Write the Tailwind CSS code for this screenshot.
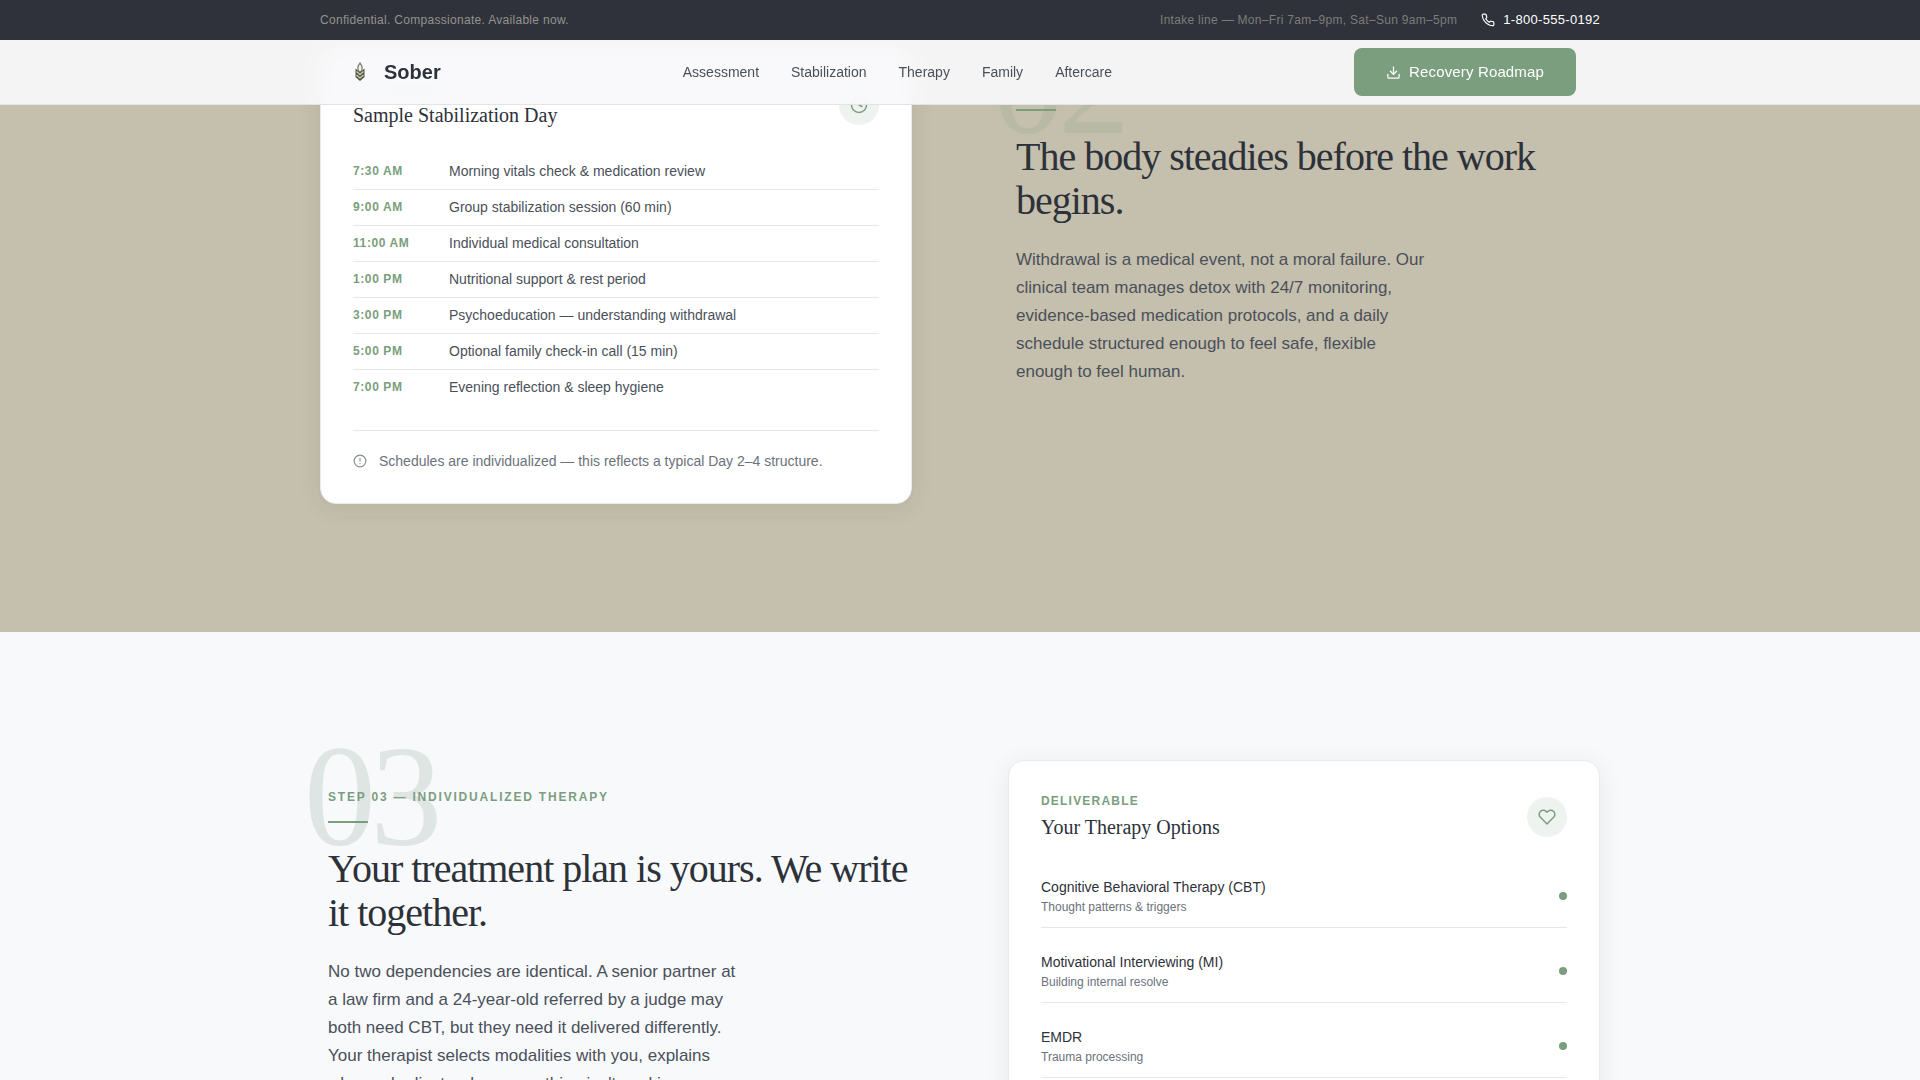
<!DOCTYPE html>
<html lang="en">
<head>
  <meta charset="UTF-8">
  <meta name="viewport" content="width=device-width, initial-scale=1.0">
  <title>Sober | Recovery Roadmap</title>
  <script src="https://cdn.jsdelivr.net/npm/@tailwindcss/browser@4"></script>
</head>
<body class="bg-[#f8f9fb] text-[#2d3139] font-['Liberation_Sans',sans-serif] overflow-x-hidden">

  <!-- Top bar + Navigation -->
  <header class="fixed top-0 inset-x-0 z-50">
    <div class="bg-[#2f323b]">
      <div class="max-w-7xl mx-auto h-10 flex items-center justify-between text-xs tracking-wide">
        <p class="text-[#94928c]">Confidential. Compassionate. Available now.</p>
        <div class="flex items-center gap-6">
          <span class="text-[#7d7c79]">Intake line — Mon–Fri 7am–9pm, Sat–Sun 9am–5pm</span>
          <a href="tel:18005550192" class="flex items-center gap-2 text-[13px] text-white">
            <svg class="size-3.5" viewBox="0 0 24 24" fill="none" stroke="currentColor" stroke-width="2" stroke-linecap="round" stroke-linejoin="round"><path d="M22 16.92v3a2 2 0 0 1-2.18 2 19.79 19.79 0 0 1-8.63-3.07 19.5 19.5 0 0 1-6-6 19.79 19.79 0 0 1-3.07-8.67A2 2 0 0 1 4.11 2h3a2 2 0 0 1 2 1.72 12.84 12.84 0 0 0 .7 2.81 2 2 0 0 1-.45 2.11L8.09 9.91a16 16 0 0 0 6 6l1.27-1.27a2 2 0 0 1 2.11-.45 12.84 12.84 0 0 0 2.81.7A2 2 0 0 1 22 16.92z"/></svg>
            1-800-555-0192
          </a>
        </div>
      </div>
    </div>
    <div class="bg-[#f8f9fb]/92 backdrop-blur-md border-b border-[#e2e5e3]">
      <div class="max-w-7xl mx-auto px-6 h-16 flex items-center justify-between">
        <a href="#" class="flex items-center gap-2 text-xl font-bold">
          <svg class="size-8" viewBox="0 0 32 32">
            <path d="M16 7l2 3.4v4L16 16.5l-2-2.1v-4z" fill="#f3f4ea" stroke="#6a6c56" stroke-width="1.1"/>
            <path d="M11.5 12.5l4.5 4 4.5-4V21L16 25l-4.5-4z" fill="#4d5046"/>
            <path d="M12.5 15.5l3.5 3 3.5-3M12.5 19l3.5 3 3.5-3" fill="none" stroke="#c4c79d" stroke-width="1.6"/>
          </svg>
          Sober
        </a>
        <nav class="flex gap-8 text-sm text-[#4a5059]">
          <a href="#assessment">Assessment</a>
          <a href="#stabilization">Stabilization</a>
          <a href="#therapy">Therapy</a>
          <a href="#family">Family</a>
          <a href="#aftercare">Aftercare</a>
        </nav>
        <button class="h-12 px-8 flex items-center gap-2 rounded-lg bg-[#7a9e7e] text-white text-[15px] tracking-[0.01em]">
          <svg class="size-[15px]" viewBox="0 0 24 24" fill="none" stroke="currentColor" stroke-width="2" stroke-linecap="round" stroke-linejoin="round"><path d="M21 15v4a2 2 0 0 1-2 2H5a2 2 0 0 1-2-2v-4"/><path d="M7 10l5 5 5-5"/><path d="M12 15V3"/></svg>
          Recovery Roadmap
        </button>
      </div>
    </div>
  </header>

  <main class="-mt-20">
    <!-- Step 02 -->
    <section id="stabilization" class="bg-[#c5bfad] py-32">
      <div class="max-w-7xl mx-auto grid grid-cols-1 lg:grid-cols-2 gap-24">
        <div class="bg-white border border-[#e8ebe8] rounded-2xl p-8 shadow-[0_4px_24px_rgba(45,49,57,0.08)]">
          <div class="flex items-center justify-between mb-[25px]">
            <div>
              <p class="text-xs font-bold tracking-widest text-[#7a9e7e] mb-1">DELIVERABLE</p>
              <h3 class="font-['Liberation_Serif',serif] text-xl">Sample Stabilization Day</h3>
            </div>
            <div class="size-10 rounded-full bg-[#7a9e7e]/12 text-[#7a9e7e] flex items-center justify-center">
              <svg class="size-[18px]" viewBox="0 0 24 24" fill="none" stroke="currentColor" stroke-width="2" stroke-linecap="round" stroke-linejoin="round"><circle cx="12" cy="12" r="10"/><path d="M12 6v6l4 2"/></svg>
            </div>
          </div>
          <ul id="scheduleList" class="text-sm text-[#4a5059] divide-y divide-[#e5e8e9]"></ul>
          <p class="mt-[25px] pt-5 border-t border-[#e5e8e9] flex items-center gap-3 text-sm text-[#6b727c]">
            <svg class="size-3.5 text-[#868c94]" viewBox="0 0 24 24" fill="none" stroke="currentColor" stroke-width="2" stroke-linecap="round" stroke-linejoin="round"><circle cx="12" cy="12" r="10"/><path d="M12 8v4"/><path d="M12 16h.01"/></svg>
            Schedules are individualized — this reflects a typical Day 2–4 structure.
          </p>
        </div>

        <div class="relative pl-2 pt-[29px]">
          <span class="absolute -top-[35px] -left-4 font-['Liberation_Serif',serif] text-[144px] leading-none tracking-[-0.04em] text-[#7a9e7e]/15">02</span>
          <div class="relative">
            <p class="text-xs font-bold tracking-[0.15em] text-[#7a9e7e] mb-4">STEP 02 — MEDICAL STABILIZATION</p>
            <div class="w-10 h-0.5 bg-[#7a9e7e] mb-6"></div>
            <h2 class="font-['Liberation_Serif',serif] text-[40px] leading-11 tracking-tight mb-[23px]">The body steadies before the work begins.</h2>
            <p class="max-w-[420px] text-[17px] leading-7 text-[#4a5059]">Withdrawal is a medical event, not a moral failure. Our clinical team manages detox with 24/7 monitoring, evidence-based medication protocols, and a daily schedule structured enough to feel safe, flexible enough to feel human.</p>
          </div>
        </div>
      </div>
    </section>

    <!-- Step 03 -->
    <section id="therapy" class="py-32">
      <div class="max-w-7xl mx-auto grid grid-cols-1 lg:grid-cols-2 gap-24">
        <div class="relative pl-2 pt-[29px]">
          <span class="absolute -top-[35px] -left-4 font-['Liberation_Serif',serif] text-[144px] leading-none tracking-[-0.04em] text-[#7b9583]/20">03</span>
          <div class="relative">
            <p class="text-xs font-bold tracking-[0.15em] text-[#7a9e7e] mb-4">STEP 03 — INDIVIDUALIZED THERAPY</p>
            <div class="w-10 h-0.5 bg-[#7a9e7e] mb-6"></div>
            <h2 class="font-['Liberation_Serif',serif] text-[40px] leading-11 tracking-tight mb-[23px]">Your treatment plan is yours. We write it together.</h2>
            <p class="max-w-[420px] text-[17px] leading-7 text-[#4a5059]">No two dependencies are identical. A senior partner at a law firm and a 24-year-old referred by a judge may both need CBT, but they need it delivered differently. Your therapist selects modalities with you, explains why, and adjusts when something isn't working.</p>
          </div>
        </div>

        <div class="bg-white border border-[#e8ebe8] rounded-2xl p-8 shadow-[0_4px_24px_rgba(45,49,57,0.08)]">
          <div class="flex items-center justify-between mb-6">
            <div>
              <p class="text-xs font-bold tracking-widest text-[#7a9e7e] mb-1">DELIVERABLE</p>
              <h3 class="font-['Liberation_Serif',serif] text-xl">Your Therapy Options</h3>
            </div>
            <div class="size-10 rounded-full bg-[#7a9e7e]/12 text-[#7a9e7e] flex items-center justify-center">
              <svg class="size-[18px]" viewBox="0 0 24 24" fill="none" stroke="currentColor" stroke-width="2" stroke-linecap="round" stroke-linejoin="round"><path d="M20.84 4.61a5.5 5.5 0 0 0-7.78 0L12 5.67l-1.06-1.06a5.5 5.5 0 0 0-7.78 7.78l1.06 1.06L12 21.23l7.78-7.78 1.06-1.06a5.5 5.5 0 0 0 0-7.78z"/></svg>
            </div>
          </div>
          <ul id="therapyList" class="space-y-3"></ul>
        </div>
      </div>
    </section>
  </main>

  <script>
    const schedule = [
      ['7:30 AM', 'Morning vitals check & medication review'],
      ['9:00 AM', 'Group stabilization session (60 min)'],
      ['11:00 AM', 'Individual medical consultation'],
      ['1:00 PM', 'Nutritional support & rest period'],
      ['3:00 PM', 'Psychoeducation — understanding withdrawal'],
      ['5:00 PM', 'Optional family check-in call (15 min)'],
      ['7:00 PM', 'Evening reflection & sleep hygiene']
    ];

    const therapies = [
      ['Cognitive Behavioral Therapy (CBT)', 'Thought patterns & triggers'],
      ['Motivational Interviewing (MI)', 'Building internal resolve'],
      ['EMDR', 'Trauma processing']
    ];

    document.getElementById("scheduleList").innerHTML = schedule.map(s => `
      <li class="flex items-center gap-4 py-2 leading-[19px]">
        <span class="w-20 text-xs leading-[19px] font-bold tracking-wider text-[#7a9e7e]">${s[0]}</span>
        <span>${s[1].replace('&', '&amp;')}</span>
      </li>`).join('');

    document.getElementById("therapyList").innerHTML = therapies.map(t => `
      <li class="flex items-center justify-between py-3 border-b border-[#e5e8e9]">
        <div>
          <p class="text-sm">${t[0]}</p>
          <p class="text-xs text-[#6b727c] mt-0.5">${t[1].replace('&', '&amp;')}</p>
        </div>
        <span class="size-2 rounded-full bg-[#7a9e7e]"></span>
      </li>`).join('');
  </script>
</body>
</html>
